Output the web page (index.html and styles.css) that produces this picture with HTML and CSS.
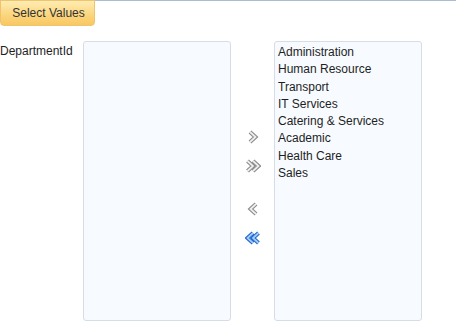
FILE: index.html
```html
<!DOCTYPE html>
<html lang="en">
<head>
    <meta charset="UTF-8">
    <title>Select Values</title>
    <link rel="stylesheet" href="styles.css">
</head>
<body>
    <div class="header">
        <button class="tab-button">Select Values</button>
    </div>

    <div class="picker-row">
        <label class="picker-label">DepartmentId</label>
        <div class="list-box"></div>

        <div class="move-buttons">
            <!-- add selected -->
            <svg class="move-icon" width="16" height="14" viewBox="0 0 16 14">
                <polyline class="edge" points="5,2 10.5,7 5,12"/>
                <polyline class="core" points="5,2 10.5,7 5,12"/>
            </svg>
            <!-- add all -->
            <svg class="move-icon" width="16" height="14" viewBox="0 0 16 14">
                <polyline class="edge" points="2.5,2 8,7 2.5,12"/>
                <polyline class="core" points="2.5,2 8,7 2.5,12"/>
                <polyline class="edge" points="8,2 13.5,7 8,12"/>
                <polyline class="core" points="8,2 13.5,7 8,12"/>
            </svg>
            <!-- remove selected -->
            <svg class="move-icon gap-above" width="16" height="14" viewBox="0 0 16 14">
                <polyline class="edge" points="11,2 5.5,7 11,12"/>
                <polyline class="core" points="11,2 5.5,7 11,12"/>
            </svg>
            <!-- remove all -->
            <svg class="move-icon active" width="16" height="14" viewBox="0 0 16 14">
                <polyline class="edge" points="8,2 2.5,7 8,12"/>
                <polyline class="core" points="8,2 2.5,7 8,12"/>
                <polyline class="edge" points="13.5,2 8,7 13.5,12"/>
                <polyline class="core" points="13.5,2 8,7 13.5,12"/>
            </svg>
        </div>

        <div class="list-box">
            <div class="list-item">Administration</div>
            <div class="list-item">Human Resource</div>
            <div class="list-item">Transport</div>
            <div class="list-item">IT Services</div>
            <div class="list-item">Catering &amp; Services</div>
            <div class="list-item">Academic</div>
            <div class="list-item">Health Care</div>
            <div class="list-item">Sales</div>
        </div>
    </div>
</body>
</html>
```

FILE: styles.css
```css
body {
    margin: 0;
    font-family: "Liberation Sans", Arial, sans-serif;
    font-size: 12px;
    color: #1e1e1e;
    background-color: white;
}
.header {
    border-top: 1px solid #abbdd4;
    height: 24px;
}
.tab-button {
    display: block;
    margin-top: -1px;
    width: 95px;
    height: 26px;
    padding: 0 0 0 2px;
    font-family: inherit;
    font-size: 12px;
    color: #333;
    background: linear-gradient(#feecb4, #fbd57c 60%, #f8c862);
    border: 1px solid #efc46a;
    border-radius: 0 0 4px 4px;
    cursor: pointer;
}
.picker-row {
    display: flex;
    align-items: flex-start;
    margin-top: 16px;
}
.picker-label {
    width: 83px;
    padding-top: 3px;
    line-height: 14px;
}
.list-box {
    box-sizing: border-box;
    width: 148px;
    height: 280px;
    padding: 2px 3px 0;
    background-color: #f7fbff;
    border: 1px solid #d5dde6;
    border-radius: 3px;
}
.list-item {
    line-height: 17.3px;
    white-space: nowrap;
}
.move-buttons {
    width: 43px;
    display: flex;
    flex-direction: column;
    align-items: center;
    gap: 15px;
    padding-top: 89px;
}
.move-icon .edge {
    fill: none;
    stroke: #8c8c8c;
    stroke-width: 4;
}
.move-icon .core {
    fill: none;
    stroke: #efefef;
    stroke-width: 1.7;
}
.move-icon.gap-above {
    margin-top: 14px;
}
.move-icon.active .edge {
    stroke: #2468cc;
}
.move-icon.active .core {
    stroke: #a4cdf8;
}
```
